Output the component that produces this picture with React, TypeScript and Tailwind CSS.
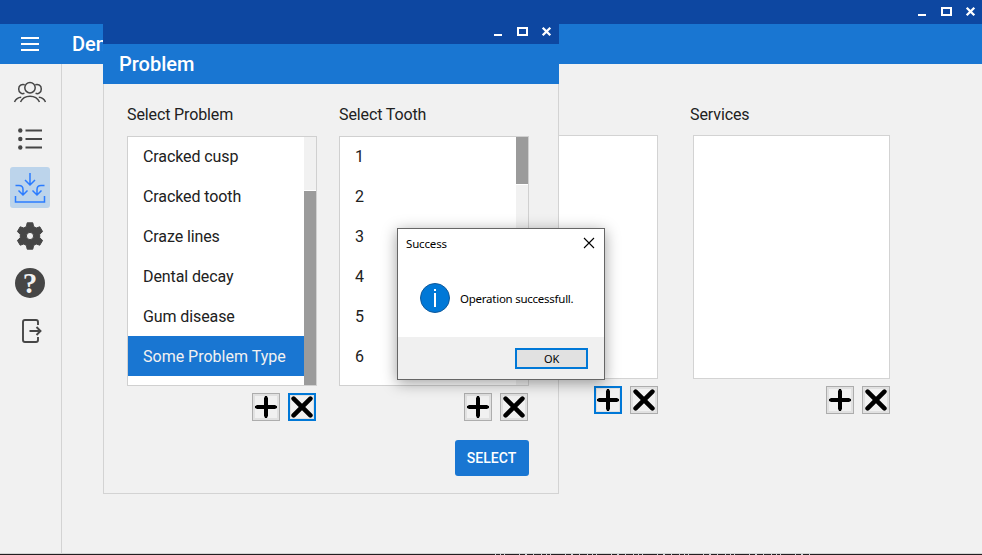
import type { ReactNode } from "react";

function WindowControls() {
  return (
    <svg width="60" height="14" viewBox="0 0 60 14" fill="none" className="block">
      <path d="M1 10h8v2H1z" fill="#fff" />
      <path d="M25 4h9v7h-9z" stroke="#fff" strokeWidth="2" />
      <path d="M49.700 3.700l7.600 7.600M57.300 3.700l-7.600 7.600" stroke="#fff" strokeWidth="2.300" />
    </svg>
  );
}

function IconButton({ kind, active = false }: { kind: "add" | "remove"; active?: boolean }) {
  return (
    <button
      className={`flex size-7 items-center justify-center bg-[#e1e1e1] ${active ? "border-2 border-[#0078d7]" : "border border-[#adadad]"}`}
    >
      <svg width="22" height="22" viewBox="0 0 22 22" className="shrink-0 bg-[#f1f1f1]">
        <path
          d={kind === "add" ? "M11 1.4v19.2M1.4 11h19.2" : "M2.6 2.6l16.8 16.8M19.4 2.6L2.6 19.4"}
          stroke="#000"
          strokeWidth={kind === "add" ? 4 : 4.6}
          strokeLinecap={kind === "add" ? "butt" : "round"}
        />
        {kind === "add" && <path d="M11 1v20M1 11h20" stroke="#000" strokeWidth="2.6" strokeLinecap="round" />}
      </svg>
    </button>
  );
}

function ButtonPair({ active }: { active?: "add" | "remove" }) {
  return (
    <div className="mt-[7px] flex justify-end gap-2">
      <IconButton kind="add" active={active === "add"} />
      <IconButton kind="remove" active={active === "remove"} />
    </div>
  );
}

function PickList({ title, items, selected, thumb, children }: { title: string; items: string[]; selected?: string; thumb: string; children: ReactNode }) {
  return (
    <section className="w-[190px]">
      <h2 className="h-[32px] pt-px text-[16px] leading-5 tracking-[-0.12px]">{title}</h2>
      <div className="flex h-[250px] overflow-hidden border border-[#d0d0d0] bg-white">
        <ul className="-mt-px flex-1">
          {items.map((t) => (
            <li key={t} className={`h-10 pl-[15px] leading-[42px] whitespace-nowrap ${t === selected ? "bg-[#1976d2] text-[#f1f1f1]" : "tracking-[-0.1px]"}`}>
              {t}
            </li>
          ))}
        </ul>
        <div className="h-full w-3 bg-[#f1f1f1]">
          <div className={`border-white bg-[#9b9b9b] ${thumb}`} />
        </div>
      </div>
      <div className="pr-px">{children}</div>
    </section>
  );
}

function ProblemWindow() {
  return (
    <div className="absolute top-6 left-[103px] flex h-[470px] w-[456px] flex-col bg-[#f1f1f1]">
      <div className="flex h-5 shrink-0 justify-end bg-[#0d47a1] pr-1.5">
        <WindowControls />
      </div>
      <div className="h-10 shrink-0 bg-[#1976d2] pl-4 text-[20px] leading-10 font-medium text-white">Problem</div>
      <div className="flex-1 border border-t-0 border-[#d3d3d3] pt-5 pl-[23px]">
        <div className="flex gap-[22px]">
          <PickList
            title="Select Problem"
            items={["Cracked cusp", "Cracked tooth", "Craze lines", "Dental decay", "Gum disease", "Some Problem Type"]}
            selected="Some Problem Type"
            thumb="mt-[53px] h-[195px] border-t"
          >
            <ButtonPair active="remove" />
          </PickList>
          <PickList title="Select Tooth" items={["1", "2", "3", "4", "5", "6"]} thumb="h-12 border-b">
            <ButtonPair />
          </PickList>
        </div>
        <div className="mt-[19px] flex justify-end pr-[29px]">
          <button className="h-9 w-[74px] rounded-[3px] bg-[#1976d2] pr-px text-[14px] font-medium text-white">SELECT</button>
        </div>
      </div>
    </div>
  );
}

function MessageBox() {
  return (
    <div className="absolute top-[228px] left-[397px] flex h-[152px] w-[208px] flex-col border border-[#666] bg-white font-['Noto_Sans',sans-serif] text-[11.5px] text-black shadow-[0_3px_14px_rgba(0,0,0,0.38)]">
      <div className="flex h-[29px] items-center justify-between pr-[9px] pl-2">
        <span className="tracking-[-0.15px]">Success</span>
        <svg width="12" height="12" viewBox="0 0 12 12" stroke="#000" strokeWidth="1.1" className="-mt-0.5">
          <path d="M1 1l10 10M11 1L1 11" />
        </svg>
      </div>
      <div className="flex flex-1 items-center pt-px pl-[22px]">
        <svg width="30" height="30" viewBox="0 0 30 30">
          <circle cx="15" cy="15" r="14.5" fill="#0078d7" stroke="#10599a" />
          <path d="M14 6h2v2h-2zM14 10h2v14h-2z" fill="#fff" />
        </svg>
        <span className="ml-2.5 pt-0.5 tracking-[-0.25px] whitespace-nowrap">Operation successfull.</span>
      </div>
      <div className="flex h-[42px] justify-end bg-[#f0f0f0] pt-[11px] pr-4">
        <button className="flex h-[21px] w-[73px] items-center justify-center border-2 border-[#0078d7] bg-[#e1e1e1] pt-0.5 text-[11px] tracking-[-0.3px]">OK</button>
      </div>
    </div>
  );
}

function Sidebar() {
  return (
    <nav className="flex w-[62px] shrink-0 flex-col items-center border-r border-[#d3d3d3] pr-px text-[#464646]">
      <svg width="34" height="24" viewBox="0 0 34 24" className="mt-4" fill="none" stroke="currentColor" strokeWidth="1.5">
        <circle cx="17" cy="7.700" r="5.200" />
        <path d="M7.500 22C9.400 18 13 16.300 17 16.300s7.600 1.700 9.500 5.700M11.700 4.700C8.700 3.700 5.700 5.500 5.700 9c0 3.700 3.200 5.400 5.700 4.300M22.300 4.700c3-1 6 .800 6 4.300 0 3.700-3.200 5.400-5.700 4.300M1.500 22c1.200-2.800 3.400-4.600 6.700-4.800M32.500 22c-1.200-2.800-3.400-4.600-6.700-4.800" />
      </svg>
      <svg width="26" height="24" viewBox="0 0 26 24" className="mt-[23px]" fill="currentColor">
        <circle cx="3.300" cy="3.500" r="2.200" />
        <circle cx="3.300" cy="12" r="2.200" />
        <circle cx="3.300" cy="20.500" r="2.200" />
        <path d="M8.500 2.500H25v2H8.500zM8.500 11H25v2H8.500zM8.500 19.500H25v2H8.500z" />
      </svg>
      <div className="mt-4 flex h-[41px] w-10 shrink-0 items-center justify-center rounded-[3px] bg-[#bcd4eb] text-[#2b7cff]">
        <svg width="32" height="32" viewBox="0 0 32 32" fill="none" stroke="currentColor" strokeWidth="1.5">
          <path d="M16 1V13M11 8l5 5 5-5M1.500 13.500H5c3 0 4 2 4 4V23M4.500 18.500L9 23l4.500-4.500M30.500 13.500H27c-3 0-4 2-4 4V23M18.500 18.500L23 23l4.500-4.500M1.500 24v6h29v-6" />
        </svg>
      </div>
      <svg width="28" height="28" viewBox="0 0 28 28" className="mt-3.5" fill="currentColor">
        <path fillRule="evenodd" strokeLinejoin="round" stroke="currentColor" strokeWidth="1" d="M11.200.800h5.600l.800 3.700 2.600 1.500 3.600-1.200 2.800 4.800-2.900 2.600v3.600l2.900 2.600-2.800 4.800-3.600-1.200-2.600 1.500-.800 3.700h-5.600l-.800-3.700L7.800 22l-3.600 1.200-2.800-4.800 2.900-2.600v-3.600L1.400 9.600l2.800-4.800L7.800 6l2.600-1.500zM14 10.400a3.600 3.600 0 1 0 0 7.200 3.600 3.600 0 0 0 0-7.200z" />
      </svg>
      <div className="mt-[18px] flex size-[30px] shrink-0 items-center justify-center rounded-full bg-[#464646] font-['Liberation_Serif',serif] text-[29px] leading-[30px] font-bold text-[#f1f1f1]">
        ?
      </div>
      <svg width="22" height="26" viewBox="0 0 22 26" className="mt-5 ml-1" fill="none" stroke="currentColor" strokeWidth="1.9">
        <path d="M17 7V4q0-2-2-2H4Q2 2 2 4v18q0 2 2 2h11q2 0 2-2v-3M8.500 13h11M15.500 9l4 4-4 4" />
      </svg>
    </nav>
  );
}

export default function App() {
  return (
    <div className="relative flex h-[555px] w-[982px] flex-col overflow-hidden bg-[#f1f1f1] font-[Roboto,sans-serif] text-[16px] text-[#212121]">
      <div className="flex h-6 shrink-0 justify-end bg-[#0d47a1] pt-1 pr-[5px]">
        <WindowControls />
      </div>
      <header className="flex h-10 shrink-0 items-center bg-[#1976d2] pl-[21px] text-[20px] font-medium text-white">
        <svg width="18" height="14" viewBox="0 0 18 14" fill="#fff" shapeRendering="crispEdges">
          <path d="M0 0h18v2H0zM0 6h18v2H0zM0 12h18v2H0z" />
        </svg>
        <span className="ml-[33px]">Dental</span>
      </header>
      <div className="flex flex-1 border-b border-[#d3d3d3]">
        <Sidebar />
        <main className="flex flex-1 justify-end gap-[35px] pt-10 pr-[92px]">
          <section className="w-[197px]">
            <div className="h-[31px]" />
            <div className="h-[244px] border border-[#d3d3d3] bg-white" />
            <ButtonPair active="add" />
          </section>
          <section className="w-[197px]">
            <h2 className="-ml-[3px] h-[31px] pt-px leading-5 tracking-[-0.1px]">Services</h2>
            <div className="h-[244px] border border-[#d3d3d3] bg-white" />
            <ButtonPair />
          </section>
        </main>
      </div>
      <svg width="982" height="1" viewBox="0 0 982 1" className="block shrink-0 bg-[#221e20]">
        <path d="M495 .5H813" stroke="#c9d3d6" strokeDasharray="1 4 1 3 1 14 1 5 2 6 1 7" />
      </svg>
      <ProblemWindow />
      <MessageBox />
    </div>
  );
}
